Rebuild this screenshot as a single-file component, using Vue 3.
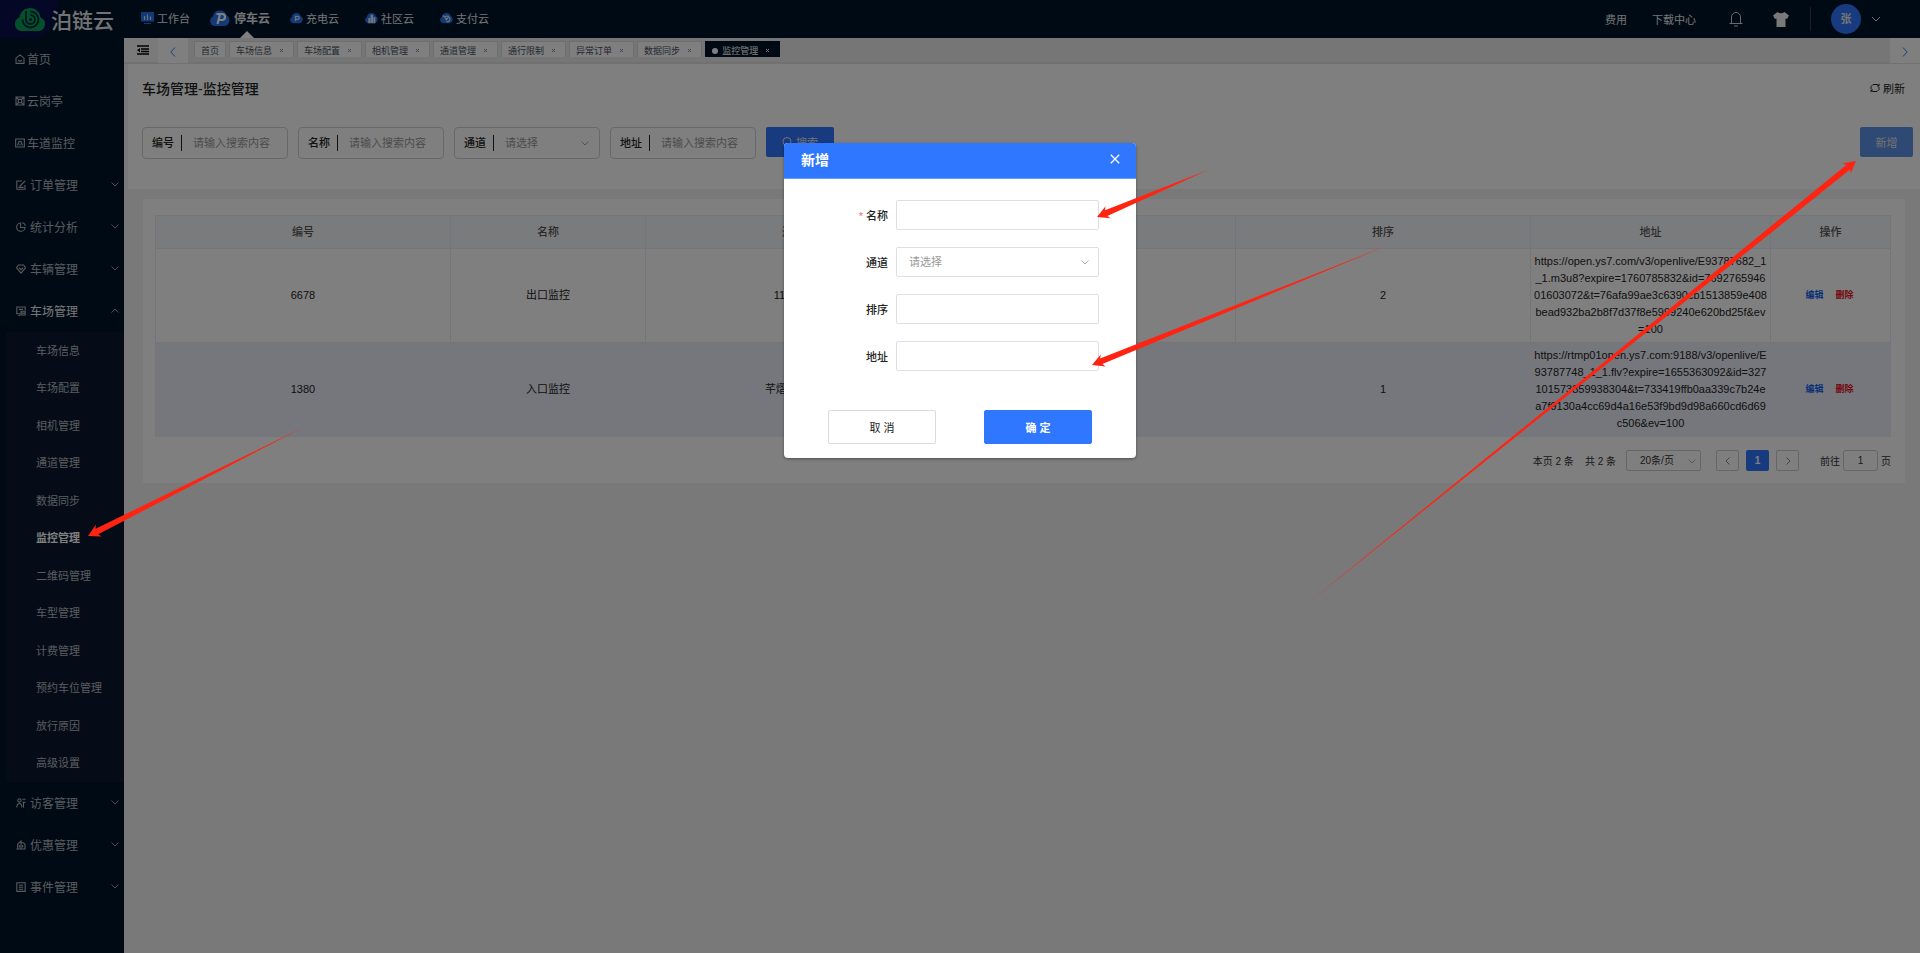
<script setup>
import { ref } from 'vue'

const products = [
  { name: '工作台', icon: 'desk' },
  { name: '停车云', icon: 'park', active: true },
  { name: '充电云', icon: 'charge' },
  { name: '社区云', icon: 'community' },
  { name: '支付云', icon: 'pay' }
]

const topMenu = [
  { name: '首页', icon: 'home' },
  { name: '云岗亭', icon: 'booth' },
  { name: '车道监控', icon: 'lane' },
  { name: '订单管理', icon: 'order', group: true },
  { name: '统计分析', icon: 'chart', group: true },
  { name: '车辆管理', icon: 'gem', group: true },
  { name: '车场管理', icon: 'lot', group: true, open: true }
]
const subMenu = ['车场信息', '车场配置', '相机管理', '通道管理', '数据同步', '监控管理', '二维码管理', '车型管理', '计费管理', '预约车位管理', '放行原因', '高级设置']
const bottomMenu = [
  { name: '访客管理', icon: 'visitor', group: true },
  { name: '优惠管理', icon: 'coupon', group: true },
  { name: '事件管理', icon: 'event', group: true }
]
const icons = {
  home: 'M1.200 5 6 1l4.800 4v6.200H1.200zM4 7.500q2 2 4 0',
  booth: 'M.5 1.200h11M.5 10.800h11M1.200 1.200v9.600M10.800 1.200v9.600M4 4h4v4H4zM2 2l2 2M10 2 8 4M2 10l2-2M10 10 8 8',
  lane: 'M.8 1.200h10.400v9.600H.8zM5 3.500 3 9M7 3.500 9 9M6 4v1M6 7v2',
  order: 'M7 1.200H1v9.800h9.800V6M4.500 7.500 11 1M3 8.800h6',
  chart: 'M5.500 1.200a5 5 0 1 0 5.300 5.300H5.500zM7.500.8a4.500 4.500 0 0 1 3.700 3.700',
  gem: 'M3 1.200h6L11.400 4.500 6 11 .6 4.500zM3.500 4.500 6 7l2.500-2.500',
  lot: 'M11 5V1.200H1v8h4M3 11.200h2M6 6.200h5v4.600H6zM6 8.500h5M3.500 4h5',
  visitor: 'M4 1a2 2 0 1 0 .1 0M1 11.500Q1 6.500 4 6.500t3 5M7.500 1.500h4M8 5h3.500M9 5v6.500',
  coupon: 'M2 10.800V5l4-3.800v9.600M6 3.200h3l1.800 2v5.600M.5 10.800h11M8 6v3M4 6v3',
  event: 'M1 .8h10v10.400H1zM3.500 3.800h5M3.500 6.200h5M3.500 8.600h5'
}

const tabs = ['首页', '车场信息', '车场配置', '相机管理', '通道管理', '通行限制', '异常订单', '数据同步', '监控管理']
const filters = [
  { id: 'f-no', label: '编号' },
  { id: 'f-name', label: '名称' },
  { id: 'f-lane', label: '通道', select: true },
  { id: 'f-addr', label: '地址' }
]
const rows = [
  {
    id: '6678', name: '出口监控', lane: '111通道', sort: '2',
    url: [
      'https://open.ys7.com/v3/openlive/E93787682_1',
      '_1.m3u8?expire=1760785832&id=7692765946',
      '01603072&t=76afa99ae3c6390cb1513859e408',
      'bead932ba2b8f7d37f8e5999240e620bd25f&ev',
      '=100'
    ]
  },
  {
    id: '1380', name: '入口监控', lane: '芊熠ab通道', sort: '1',
    url: [
      'https://rtmp01open.ys7.com:9188/v3/openlive/E',
      '93787748_1_1.flv?expire=1655363092&id=327',
      '101573859938304&t=733419ffb0aa339c7b24e',
      'a7f9130a4cc69d4a16e53f9bd9d98a660cd6d69',
      'c506&ev=100'
    ]
  }
]

const form = ref({ name: '', lane: '', sort: '', addr: '' })
const formFields = [
  { key: 'name', label: '名称', required: true },
  { key: 'lane', label: '通道', select: true },
  { key: 'sort', label: '排序' },
  { key: 'addr', label: '地址' }
]

// Tapered pointer from a tail point to an arrow head.
function arrow(x, y, tx, ty) {
  const len = Math.hypot(tx - x, ty - y)
  const dx = (tx - x) / len
  const dy = (ty - y) / len
  const at = (along, side) => `${(x + dx * along - dy * side).toFixed(1)},${(y + dy * along + dx * side).toFixed(1)}`
  return [at(0, 0), at(12, 6.5), at(10, 3), at(len, 0), at(10, -3), at(12, -6.5)].join(' ')
}
const arrows = [
  arrow(88, 536, 304, 427),
  arrow(1097, 217, 1208, 170),
  arrow(1092, 365, 1386, 246),
  arrow(1856, 161, 1308, 603)
]
</script>

<template>
  <div class="page">
    <header class="topbar">
      <a class="brand" href="#">
        <svg class="brand-mark" viewBox="0 0 32 23" aria-hidden="true">
          <path d="M7 23a7 7 0 0 1-1.500-13.500C6 4 10.500 0 16 0s10 4 10.500 9.500A7 7 0 0 1 25 23z" fill="#06a05a" />
          <path d="M12 3v8.500a4.500 4.500 0 1 0 4.500-4.500M16.500 3.500a8 8 0 1 1-8 8" fill="none" stroke="#04263a" stroke-width="1.800" />
          <circle cx="16.500" cy="11.500" r="1.500" fill="#04263a" />
        </svg>
        <span>泊链云</span>
      </a>
      <nav class="products">
        <a v-for="p in products" :key="p.name" href="#" class="product" :class="{ active: p.active }">
          <svg v-if="p.icon === 'desk'" class="product-icon" viewBox="0 0 13 12" aria-hidden="true">
            <path d="M0 0h13v9.500H0zM3 11h7v1H3z" fill="#2474ee" />
            <path d="M3.500 4v4M6.500 2.500V8M9.500 4.500V8" stroke="#d5e6ff" stroke-width="1.200" />
          </svg>
          <svg v-else class="product-icon" viewBox="0 0 20 18" aria-hidden="true">
            <path d="M5 17a5 5 0 0 1-2-9.500A7 7 0 0 1 16.500 6 6 6 0 0 1 15 17z" fill="#2474ee" />
            <path v-if="p.icon === 'park'" d="M6.500 5H12a3 3 0 0 1 0 6H9M10 5 7.500 15" fill="none" stroke="#fff" stroke-width="2.200" />
            <path v-else-if="p.icon === 'charge'" d="M8.500 14V6.500H12a2 2 0 0 1 0 4.500H9" fill="none" stroke="#d5e6ff" stroke-width="2" />
            <path v-else-if="p.icon === 'community'" d="M5 9h3v8H5zM8.500 4h4v13h-4zM13 8h3v9h-3z" fill="#d5e6ff" />
            <path v-else d="M4 6h2l4 6 3-5M10 15a4.500 4.500 0 1 0-2-8M8 10h4" fill="none" stroke="#d5e6ff" stroke-width="1.800" />
          </svg>
          <span>{{ p.name }}</span>
        </a>
      </nav>
      <div class="tools">
        <a href="#">费用</a>
        <a href="#" class="download">下载中心</a>
        <button class="icon-btn bell" aria-label="通知">
          <svg viewBox="0 0 14 16" width="14" height="16" fill="none" stroke="#d0d3d8" aria-hidden="true">
            <path d="M2.500 12V6a4.500 4.500 0 0 1 9 0v6M.5 12.500h13M5 15h4" />
          </svg>
        </button>
        <button class="icon-btn shirt" aria-label="主题">
          <svg viewBox="0 0 16 15" width="16" height="15" aria-hidden="true">
            <path d="M4.500 0q3.500 2.500 7 0L16 3.500 14 7l-1.500-.500V15h-9V6.500L2 7 0 3.500z" fill="#f2f2f2" />
          </svg>
        </button>
        <span class="divider"></span>
        <button class="user" aria-label="账户">
          <span class="avatar">张</span>
          <svg viewBox="0 0 10 6" width="10" height="6" fill="none" stroke="#e0e0e0" aria-hidden="true"><path d="m1 1 4 4 4-4" /></svg>
        </button>
      </div>
    </header>

    <div class="body">
      <aside class="sidebar">
        <a v-for="m in topMenu" :key="m.name" href="#" class="menu" :class="{ group: m.group, open: m.open }">
          <svg class="menu-icon" viewBox="0 0 12 12" aria-hidden="true"><path :d="icons[m.icon]" /></svg>
          <span>{{ m.name }}</span>
          <svg v-if="m.group" class="menu-arrow" viewBox="0 0 8 5" aria-hidden="true"><path :d="m.open ? 'm.5 4.500 3.500-3.500 3.500 3.500' : 'm.5.5 3.500 3.500L7.500.5'" /></svg>
        </a>
        <div class="submenu">
          <a v-for="s in subMenu" :key="s" href="#" :class="{ current: s === '监控管理' }">{{ s }}</a>
        </div>
        <a v-for="m in bottomMenu" :key="m.name" href="#" class="menu group">
          <svg class="menu-icon" viewBox="0 0 12 12" aria-hidden="true"><path :d="icons[m.icon]" /></svg>
          <span>{{ m.name }}</span>
          <svg class="menu-arrow" viewBox="0 0 8 5" aria-hidden="true"><path d="m.5.5 3.500 3.500L7.500.5" /></svg>
        </a>
      </aside>

      <main class="main">
        <div class="tabbar">
          <button class="fold" aria-label="收起菜单">
            <svg viewBox="0 0 12 10" width="12" height="10" aria-hidden="true">
              <path d="M0 1h12M4 4h8M4 6.500h8M0 9h12" stroke="#000" stroke-width="1.600" /><path d="M3 3v4.500L0 5.200z" fill="#000" />
            </svg>
          </button>
          <button class="scroll" aria-label="向左">
            <svg viewBox="0 0 6 10" width="6" height="10" aria-hidden="true"><path d="M5 .500.8 5 5 9.500" /></svg>
          </button>
          <div class="tabs">
            <a v-for="(t, i) in tabs" :key="t" href="#" class="tab" :class="{ on: t === '监控管理' }">
              <i v-if="t === '监控管理'" class="dot"></i>
              <span>{{ t }}</span>
              <svg v-if="i" class="tab-x" viewBox="0 0 5 5" aria-hidden="true"><path d="m1 1 3 3M4 1 1 4" /></svg>
            </a>
          </div>
          <button class="scroll" aria-label="向右">
            <svg viewBox="0 0 6 10" width="6" height="10" aria-hidden="true"><path d="M1 .5 5.200 5 1 9.500" /></svg>
          </button>
        </div>

        <section class="panel">
          <div class="panel-head">
            <h1>车场管理-监控管理</h1>
            <button class="refresh">
              <svg viewBox="0 0 10 10" width="10" height="10" fill="none" stroke="#222" aria-hidden="true">
                <path d="M1 6V3.500L3 1.500h4.500L9 3M9 4v2.500L7 8.500H2.500L1 7M9 .8V3H7M1 9.200V7h2" />
              </svg>
              刷新
            </button>
          </div>
          <div class="filters">
            <div v-for="f in filters" :key="f.id" class="filter">
              <label :for="f.id">{{ f.label }}</label>
              <template v-if="f.select">
                <select :id="f.id"><option>请选择</option></select>
                <svg class="caret" viewBox="0 0 8 5" aria-hidden="true"><path d="m.5.5 3.500 3.500L7.500.5" /></svg>
              </template>
              <input v-else :id="f.id" type="text" placeholder="请输入搜索内容" />
            </div>
            <button class="search">
              <svg viewBox="0 0 10 10" width="10" height="10" fill="none" stroke="#e6e6e6" aria-hidden="true"><circle cx="5" cy="4.500" r="4" /><path d="m7.500 7.500 2 2" /></svg>
              搜索
            </button>
            <button class="create">新增</button>
          </div>
        </section>

        <section class="card">
          <table>
            <colgroup><col /><col class="c-name" /><col /><col /><col /><col class="c-addr" /><col class="c-act" /></colgroup>
            <thead>
              <tr><th>编号</th><th>名称</th><th>通道</th><th></th><th>排序</th><th>地址</th><th>操作</th></tr>
            </thead>
            <tbody>
              <tr v-for="r in rows" :key="r.id">
                <td>{{ r.id }}</td>
                <td>{{ r.name }}</td>
                <td>{{ r.lane }}</td>
                <td></td>
                <td>{{ r.sort }}</td>
                <td class="url"><template v-for="(u, i) in r.url" :key="u"><br v-if="i" />{{ u }}</template></td>
                <td><div class="actions"><a href="#">编辑</a><a href="#" class="del">删除</a></div></td>
              </tr>
            </tbody>
          </table>
          <div class="pager">
            <span>本页 2 条</span>
            <span class="total">共 2 条</span>
            <div class="size">
              <select aria-label="每页条数"><option>20条/页</option></select>
              <svg class="caret" viewBox="0 0 8 5" aria-hidden="true"><path d="m.5.5 3.500 3.500L7.500.5" /></svg>
            </div>
            <button class="pg" aria-label="上一页"><svg viewBox="0 0 6 8" width="6" height="8" aria-hidden="true"><path d="M4.500.5 1 4l3.500 3.500" /></svg></button>
            <button class="pg now">1</button>
            <button class="pg" aria-label="下一页"><svg viewBox="0 0 6 8" width="6" height="8" aria-hidden="true"><path d="M1.500.5 5 4 1.500 7.500" /></svg></button>
            <label class="goto">前往<input type="text" value="1" />页</label>
          </div>
        </section>
      </main>
    </div>

    <div class="mask">
      <form class="dialog" role="dialog" aria-labelledby="dlg-title" @submit.prevent>
        <div class="dialog-head">
          <h2 id="dlg-title">新增</h2>
          <button type="button" aria-label="关闭">
            <svg viewBox="0 0 10 10" width="10" height="10" aria-hidden="true"><path d="m.8.8 8.400 8.400M9.200.8.8 9.200" stroke="#fff" stroke-width="1.300" /></svg>
          </button>
        </div>
        <div class="dialog-body">
          <div v-for="f in formFields" :key="f.key" class="field">
            <label :for="'d-' + f.key"><em v-if="f.required">*</em>{{ f.label }}</label>
            <div class="control">
              <template v-if="f.select">
                <select :id="'d-' + f.key" v-model="form[f.key]"><option value="">请选择</option></select>
                <svg class="caret" viewBox="0 0 8 5" aria-hidden="true"><path d="m.5.5 3.500 3.500L7.500.5" /></svg>
              </template>
              <input v-else :id="'d-' + f.key" v-model="form[f.key]" type="text" />
            </div>
          </div>
        </div>
        <div class="dialog-foot">
          <button type="button">取 消</button>
          <button type="submit" class="ok">确 定</button>
        </div>
      </form>
    </div>

    <svg class="pointers" width="1920" height="953" viewBox="0 0 1920 953" aria-hidden="true">
      <polygon v-for="a in arrows" :key="a" :points="a" />
    </svg>
  </div>
</template>

<style>
body {
  margin: 0;
}
</style>

<style scoped>
.page {
  position: relative;
  display: flex;
  flex-direction: column;
  min-height: 100vh;
  overflow: hidden;
  background: #f2f2f2;
  color: #222;
  font-family: "Liberation Sans", "Noto Sans CJK SC", sans-serif;
  font-size: 11px;
}
.page * {
  box-sizing: border-box;
}
a {
  color: inherit;
  text-decoration: none;
}
button,
input,
select {
  margin: 0;
  padding: 0;
  border: 0;
  background: none;
  color: inherit;
  font: inherit;
  outline: none;
}
select {
  appearance: none;
}
svg {
  display: block;
  flex: none;
}

.topbar {
  display: flex;
  height: 38px;
  background: #001529;
  color: #e6e8ea;
}
.brand {
  display: flex;
  align-items: center;
  gap: 5px;
  width: 141px;
  padding-left: 14px;
  background:
    radial-gradient(circle at 12px 0, #08104c 46px, transparent 47px);
  font-size: 21px;
  font-weight: 500;
}
.brand-mark {
  width: 32px;
  height: 23px;
}
.products {
  display: flex;
  gap: 19px;
}
.product {
  position: relative;
  display: flex;
  align-items: center;
  gap: 3px;
  width: 56px;
  padding-bottom: 3px;
  white-space: nowrap;
}
.product-icon {
  width: 13px;
  height: 12px;
}
.product.active {
  gap: 4px;
  width: 61px;
  margin-left: -6px;
  font-size: 12px;
  font-weight: 700;
}
.product.active .product-icon {
  width: 20px;
  height: 18px;
}
.product.active::after {
  content: "";
  position: absolute;
  bottom: 0;
  left: 30px;
  border: 7px solid transparent;
  border-top: 0;
  border-bottom-color: #fff;
}
.tools {
  display: flex;
  align-items: center;
  margin-left: auto;
  padding-right: 39px;
}
.download {
  margin-left: 25px;
}
.bell {
  margin-left: 33px;
}
.shirt {
  margin-left: 30px;
}
.divider {
  width: 1px;
  height: 24px;
  margin-left: 21px;
  background: #33404f;
}
.user {
  display: flex;
  align-items: center;
  gap: 10px;
  margin-left: 20px;
}
.avatar {
  width: 30px;
  border-radius: 50%;
  background: #3077ff;
  font-weight: 700;
  line-height: 30px;
  text-align: center;
}

.body {
  display: flex;
  flex: 1;
}
.sidebar {
  width: 124px;
  flex: none;
  background: #001529;
  color: #b2b8bf;
}
.menu {
  display: flex;
  align-items: center;
  gap: 2px;
  height: 42px;
  padding: 0 5px 1px 15px;
  font-size: 12px;
}
.menu.group {
  gap: 4px;
  padding-left: 16px;
}
.menu.open {
  color: #eef0f2;
}
.menu-icon {
  width: 10px;
  height: 10px;
  fill: none;
  stroke: #b2b8bf;
  stroke-width: 1.3;
}
.menu-arrow {
  width: 8px;
  height: 5px;
  margin-left: auto;
  fill: none;
  stroke: #9aa2ab;
}
.submenu {
  display: flex;
  flex-direction: column;
  height: 450px;
  margin-left: 6px;
  background: #0a1830;
}
.submenu a {
  display: flex;
  flex: 1;
  align-items: center;
  padding: 0 0 2px 30px;
}
.submenu .current {
  color: #fff;
  font-weight: 700;
}

.main {
  flex: 1;
  min-width: 0;
}
.tabbar {
  display: flex;
  height: 26px;
  border-bottom: 2px solid #e2e2e2;
  background: #ededed;
}
.fold {
  display: flex;
  align-items: center;
  width: 34px;
  padding-left: 13px;
  background: #f4f4f4;
}
.scroll {
  display: flex;
  align-items: center;
  justify-content: center;
  width: 30px;
  height: 25px;
  padding-top: 3px;
  background: #fff;
}
.scroll path {
  fill: none;
  stroke: #3077ff;
}
.tabs {
  display: flex;
  flex: 1;
  gap: 3px;
  padding: 3px 0 0 6px;
  font-size: 9px;
}
.tab {
  display: flex;
  align-items: center;
  gap: 7px;
  height: 16px;
  padding: 2px 9px 0 6px;
  border: 1px solid #d8dce5;
  border-bottom: 0;
  background: #fff;
  color: #495060;
  white-space: nowrap;
}
.tab:first-child {
  padding-right: 6px;
}
.tab-x {
  width: 5px;
  height: 5px;
  stroke: #8a8f99;
}
.tab.on {
  border-color: #001529;
  background: #001529;
  color: #fff;
}
.tab.on .tab-x {
  stroke: #fff;
}
.dot {
  width: 6px;
  height: 6px;
  margin-right: -3px;
  border-radius: 50%;
  background: #fff;
}

.panel {
  height: 125px;
  margin-left: 4px;
  padding: 14px 7px 0 14px;
  background: #fff;
}
.panel-head {
  display: flex;
  align-items: center;
  justify-content: space-between;
  height: 20px;
  padding-right: 8px;
}
h1 {
  margin: 0;
  font-size: 14px;
  font-weight: 500;
}
.refresh {
  display: flex;
  align-items: center;
  gap: 3px;
}
.filters {
  display: flex;
  gap: 10px;
  margin-top: 29px;
}
.filter {
  position: relative;
  display: flex;
  align-items: center;
  width: 146px;
  height: 32px;
  padding-left: 9px;
  border: 1px solid #d0d0d0;
  border-radius: 4px;
}
.filter label {
  padding-right: 7px;
  border-right: 1px solid #222;
  font-weight: 500;
  line-height: 16px;
}
.filter input,
.filter select {
  flex: 1;
  min-width: 0;
  height: 30px;
  padding-left: 11px;
}
.filter select,
input::placeholder {
  color: #999;
  opacity: 1;
}
.caret {
  position: absolute;
  top: 50%;
  right: 10px;
  width: 8px;
  height: 5px;
  margin-top: -2px;
  fill: none;
  stroke: #a8abb2;
  pointer-events: none;
}
.search,
.create {
  display: flex;
  align-items: center;
  justify-content: center;
  gap: 4px;
  width: 68px;
  height: 30px;
  border-radius: 2px;
  background: #3077ff;
  color: #e6e6e6;
}
.create {
  width: 53px;
  margin-left: auto;
  background: #5f92ea;
}

.card {
  margin: 10px 15px 0 19px;
  padding: 16px 14px 12px 12px;
  background: #fff;
}
table {
  width: 100%;
  border-top: 1px solid #e6eaf3;
  border-left: 1px solid #e6eaf3;
  border-spacing: 0;
  table-layout: fixed;
}
.c-name {
  width: 195px;
}
.c-addr {
  width: 240px;
}
.c-act {
  width: 120px;
}
th,
td {
  padding: 4px 0;
  border-right: 1px solid #e6eaf3;
  border-bottom: 1px solid #e6eaf3;
  line-height: 17px;
  text-align: center;
}
th {
  height: 33px;
  background: #f5f7fa;
  color: #555;
  font-weight: 500;
}
tbody tr:nth-child(2) td {
  border-color: #eceef8;
  background: #eceef8;
}
.url {
  white-space: nowrap;
}
.actions {
  display: flex;
  justify-content: center;
  gap: 12px;
  padding-right: 2px;
  color: #1260ee;
  font-size: 9px;
  font-weight: 700;
}
.del {
  color: #e8101c;
}
.pager {
  display: flex;
  align-items: center;
  justify-content: flex-end;
  height: 21px;
  margin-top: 13px;
  color: #333;
  font-size: 10px;
}
.total {
  margin-left: 11px;
}
.size {
  position: relative;
  width: 75px;
  height: 21px;
  margin: 0 15px 0 10px;
  border: 1px solid #ccc;
  border-radius: 2px;
}
.size select {
  width: 100%;
  height: 19px;
  padding-left: 13px;
}
.size .caret {
  right: 4px;
}
.pg {
  display: flex;
  align-items: center;
  justify-content: center;
  width: 23px;
  height: 21px;
  margin-right: 7px;
  border: 1px solid #ccc;
  border-radius: 2px;
}
.pg path {
  fill: none;
  stroke: #888;
}
.pg.now {
  border: 0;
  background: #3077ff;
  color: #fff;
  font-weight: 700;
}
.goto {
  display: flex;
  align-items: center;
  gap: 3px;
  margin-left: 14px;
}
.goto input {
  width: 35px;
  height: 21px;
  border: 1px solid #ccc;
  border-radius: 3px;
  text-align: center;
}

.mask {
  position: absolute;
  inset: 0;
  display: flex;
  align-items: flex-start;
  justify-content: center;
  padding-top: 143px;
  background: rgba(0, 0, 0, 0.5);
}
.dialog {
  width: 352px;
  border-radius: 4px;
  overflow: hidden;
  background: #fff;
  box-shadow: 0 1px 3px rgba(0, 0, 0, 0.4);
}
.dialog-head {
  display: flex;
  align-items: center;
  justify-content: space-between;
  height: 36px;
  padding: 0 16px 3px 17px;
  border-bottom: 1px solid #6a9dff;
  background: #3077ff;
  color: #fff;
}
h2 {
  margin: 0;
  font-size: 14px;
  font-weight: 700;
}
.dialog-body {
  display: flex;
  flex-direction: column;
  gap: 17px;
  padding: 21px 37px 0 0;
}
.field {
  display: flex;
  align-items: center;
  justify-content: flex-end;
  gap: 8px;
}
.field label {
  font-weight: 500;
}
.field em {
  margin-right: 3px;
  color: #f56c6c;
  font-style: normal;
}
.control {
  position: relative;
  width: 203px;
}
.control input,
.control select {
  display: block;
  width: 100%;
  height: 30px;
  padding: 0 12px;
  border: 1px solid #dcdfe6;
  border-radius: 2px;
}
.control select {
  color: #999;
}
.dialog-foot {
  display: flex;
  gap: 48px;
  padding: 39px 44px 14px;
}
.dialog-foot button {
  flex: 1;
  height: 34px;
  border: 1px solid #d8dbe2;
  border-radius: 2px;
}
.dialog-foot .ok {
  border-color: #3077ff;
  background: #3077ff;
  color: #fff;
  font-weight: 700;
}
.pointers {
  position: absolute;
  top: 0;
  left: 0;
  fill: #ff2412;
  pointer-events: none;
}
</style>
